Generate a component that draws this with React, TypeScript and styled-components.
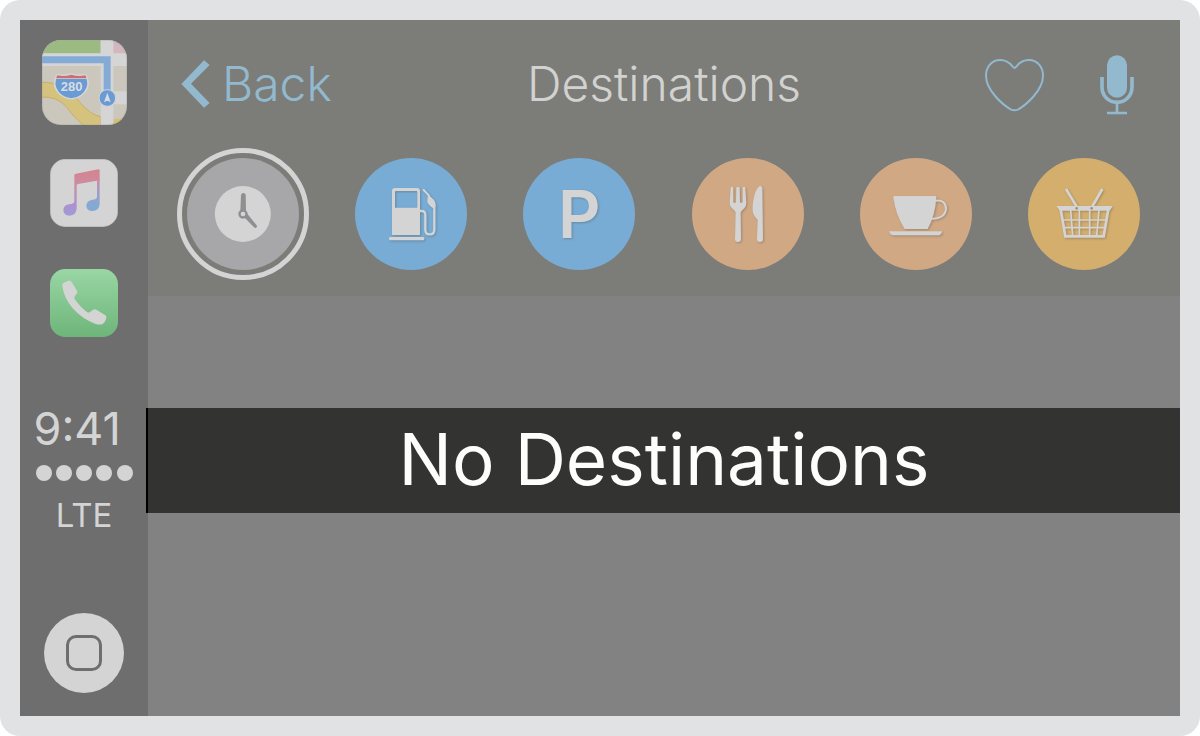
import React from "react";
import styled, { createGlobalStyle } from "styled-components";

const color = {
  frame: "#e1e2e4",
  sidebar: "#6e6e6e",
  header: "#7c7c79",
  body: "#828282",
  light: "#d4d4d4",
  text: "#d2d2d0",
  accent: "#92b9ce",
  banner: "#333331",
};

const GlobalStyle = createGlobalStyle`
  * { box-sizing: border-box; }
  body {
    margin: 0;
    background: #fff;
    font-family: Inter, "Liberation Sans", sans-serif;
  }
  button {
    padding: 0;
    border: 0;
    background: none;
    font: inherit;
    color: inherit;
    cursor: pointer;
  }
  svg { display: block; }
  h1, p { margin: 0; font-weight: inherit; }
`;

const Frame = styled.div`
  display: flex;
  min-height: 100vh;
  padding: 20px;
  border-radius: 20px;
  background: ${color.frame};
`;

const Sidebar = styled.nav`
  display: flex;
  flex-direction: column;
  align-items: center;
  flex: 0 0 128px;
  padding: 20px 0 23px;
  background: ${color.sidebar};
  color: ${color.light};
`;

const AppButton = styled.button<{ $gap: number }>`
  display: block;
  margin-bottom: ${(p) => p.$gap}px;
`;

const Status = styled.div`
  display: flex;
  flex-direction: column;
  width: 97px;
  margin-top: 28px;
`;

const Time = styled.time`
  font-size: 45px;
  line-height: 56px;
  white-space: nowrap;
  margin-left: -2px;
`;

const Signal = styled.div`
  display: flex;
  justify-content: space-between;
  margin-top: 8px;
`;

const Dot = styled.span`
  width: 16px;
  height: 16px;
  border-radius: 50%;
  background: ${color.light};
`;

const Carrier = styled.span`
  margin-top: 14px;
  font-size: 33px;
  line-height: 40px;
  text-align: center;
`;

const HomeButton = styled.button`
  display: grid;
  place-items: center;
  width: 80px;
  height: 80px;
  margin-top: auto;
  border-radius: 50%;
  background: ${color.light};
`;

const HomeMark = styled.span`
  width: 36px;
  height: 36px;
  border: 3px solid ${color.sidebar};
  border-radius: 10px;
`;

const Main = styled.main`
  display: flex;
  flex-direction: column;
  flex: 1;
  min-width: 0;
  background: ${color.body};
`;

const Header = styled.header`
  background: ${color.header};
`;

const Toolbar = styled.div`
  display: grid;
  grid-template-columns: 1fr auto 1fr;
  align-items: center;
  height: 128px;
  padding: 0 33px;
  font-size: 48px;
  line-height: 58px;
  font-weight: 300;
`;

const BackButton = styled.button`
  display: flex;
  align-items: center;
  justify-self: start;
  gap: 12px;
  color: ${color.accent};
`;

const Title = styled.h1`
  font-size: 48px;
  color: ${color.text};
`;

const Actions = styled.div`
  display: flex;
  align-items: center;
  justify-self: end;
  gap: 56px;
  padding: 2px 13px 0 0;
  color: ${color.accent};
`;

const Categories = styled.div`
  display: flex;
  justify-content: space-between;
  padding: 10px 40px 26px 39px;
`;

const CategoryButton = styled.button<{ $fill: string; $selected?: boolean }>`
  display: grid;
  place-items: center;
  width: 112px;
  height: 112px;
  border-radius: 50%;
  background: ${(p) => p.$fill};
  color: ${color.light};
  outline: ${(p) => (p.$selected ? `5px solid ${color.light}` : "none")};
  outline-offset: 5px;
`;

const Glyph = styled.svg`
  width: 112px;
  height: 112px;
  filter: drop-shadow(1px 1px 1px rgba(70, 70, 70, 0.35));
`;

const Letter = styled.span`
  font-size: 66px;
  line-height: 66px;
  font-weight: 600;
  filter: drop-shadow(1px 1px 1px rgba(70, 70, 70, 0.35));
`;

const Content = styled.section`
  flex: 1;
  padding-top: 112px;
`;

const Banner = styled.p`
  margin-left: -2px;
  padding-bottom: 3px;
  border-left: 2px solid #000;
  background: ${color.banner};
  color: #fdfdfb;
  font-size: 71px;
  line-height: 102px;
  text-align: center;
`;

const MapsIcon = () => (
  <svg width="85" height="85" viewBox="123 120 255 255" aria-hidden="true">
    <defs>
      <clipPath id="maps-tile">
        <rect x="123" y="120" width="255" height="255" rx="57" />
      </clipPath>
    </defs>
    <g clipPath="url(#maps-tile)">
      <rect x="123" y="120" width="255" height="255" fill="#cbc7bd" />
      <rect x="123" y="120" width="176" height="40" fill="#9bbb83" />
      <rect x="337" y="120" width="41" height="40" fill="#d2b7be" />
      <path
        d="M115 247Q160 244 190 265Q215 282 235 305Q268 345 299 350V380H252Q218 352 197 322Q172 288 115 291Z"
        fill="#d5c37d"
        stroke="#c9ad68"
        strokeWidth="3"
      />
      <path d="M337 358Q355 354 385 360V380H337Z" fill="#d5c06d" />
      <g fill="#d5d5d5">
        <rect x="123" y="160" width="255" height="38" />
        <rect x="299" y="120" width="38" height="255" />
        <rect x="337" y="274" width="41" height="39" />
      </g>
      <path d="M120 179H318.5V275" fill="none" stroke="#84aad6" strokeWidth="21" />
      <circle cx="319" cy="294" r="25" fill="#6b9bd4" stroke="#d5d5d5" strokeWidth="3" />
      <path d="M319 278L329 307Q323 302 319 302Q315 302 309 307Z" fill="#d8dde2" />
      <path
        d="M168 221Q190 227 211 220Q232 227 254 221Q266 238 263 257Q254 292 211 299Q168 292 159 257Q156 238 168 221Z"
        fill="#d5d5d5"
      />
      <path d="M165 237H257Q261 252 256 263Q245 290 211 295Q177 290 166 263Q161 252 165 237Z" fill="#6b9bd4" />
      <path d="M166 235Q166 230 169 226Q190 231 211 224Q232 231 253 226Q256 230 256 235Z" fill="#cc6f73" />
      <text
        x="212"
        y="273"
        textAnchor="middle"
        fontFamily="Liberation Sans, sans-serif"
        fontWeight="700"
        fontSize="39"
        fill="#d8dde2"
      >
        280
      </text>
    </g>
    <rect x="124" y="121" width="253" height="253" rx="56" fill="none" stroke="#a5a5a5" strokeOpacity="0.6" strokeWidth="2" />
  </svg>
);

const MusicIcon = () => (
  <svg width="68" height="68" viewBox="90 57 204 204" aria-hidden="true">
    <defs>
      <linearGradient id="music-left" x1="0" y1="0" x2="0" y2="1">
        <stop offset="0" stopColor="#d5838d" />
        <stop offset="0.3" stopColor="#cd8ba0" />
        <stop offset="0.75" stopColor="#ae8fcf" />
        <stop offset="1" stopColor="#a19bd6" />
      </linearGradient>
      <linearGradient id="music-right" x1="0" y1="0" x2="0" y2="1">
        <stop offset="0" stopColor="#cf8c9d" />
        <stop offset="0.4" stopColor="#a59cc4" />
        <stop offset="0.8" stopColor="#84a9d3" />
      </linearGradient>
    </defs>
    <rect x="91" y="58" width="202" height="202" rx="45" fill="#d4d4d4" stroke="#c3c3c3" strokeWidth="2" />
    <path
      d="M231 116H239V192Q238 213 217 213Q199 212 199 197Q200 182 217 179Q231 178 231 170Z"
      fill="url(#music-right)"
    />
    <path
      d="M163 106Q163 102 168 101L235 88Q239 87 239 91V121L174 132Q170 133 170 137V205Q169 227 148 227Q130 226 130 210Q131 195 148 193Q163 192 163 184Z"
      fill="url(#music-left)"
    />
  </svg>
);

const PhoneIcon = () => (
  <svg width="68" height="68" viewBox="90 387 204 204" aria-hidden="true">
    <defs>
      <linearGradient id="phone-fill" x1="0" y1="0" x2="0" y2="1">
        <stop offset="0" stopColor="#99d6a4" />
        <stop offset="1" stopColor="#6eb57a" />
      </linearGradient>
    </defs>
    <rect x="90" y="387" width="204" height="204" rx="46" fill="url(#phone-fill)" />
    <path
      d="M127 437Q126 431 131 428L145 422Q151 420 155 426L171 452Q174 458 169 463L164 469Q161 474 166 480Q184 504 201 516Q206 519 210 516L219 509Q224 506 229 509L255 525Q260 528 259 535Q256 546 248 552Q240 556 225 551Q188 538 158 505Q130 470 127 437Z"
      fill="#d4d4d4"
    />
  </svg>
);

const ChevronIcon = () => (
  <svg width="29" height="48" viewBox="34 56 87 144" aria-hidden="true">
    <path d="M103 57L120 71L64 127L120 185L103 199L35 128Z" fill="currentColor" />
  </svg>
);

const HeartIcon = () => (
  <svg width="59" height="53" viewBox="45 56 177 159" aria-hidden="true">
    <path
      d="M133.500 83C128 83 121 59 91 59C64 59 48 81 48 106C48 150 98 193 122 207Q133.500 213 145 207C169 193 219 150 219 106C219 81 203 59 176 59C146 59 139 83 133.500 83Z"
      fill="none"
      stroke="currentColor"
      strokeWidth="6"
    />
  </svg>
);

const MicIcon = () => (
  <svg width="34" height="60" viewBox="388 44 102 180" aria-hidden="true">
    <rect x="409" y="45" width="60" height="127" rx="30" fill="currentColor" />
    <path d="M394 110V141A45 45 0 0 0 484 141V110" fill="none" stroke="currentColor" strokeWidth="11" />
    <path d="M439 186V218M409 218H469" fill="none" stroke="currentColor" strokeWidth="8" />
  </svg>
);

const ClockGlyph = () => (
  <svg width="112" height="112" viewBox="51 54 336 336" aria-hidden="true">
    <circle cx="218.500" cy="222" r="84" fill="currentColor" />
    <g fill="#8f8f91">
      <path d="M213 165Q214 159 220 159Q226 159 227 165L228 214H211Z" />
      <path d="M221 230L230 219L260 256Q262 260 259 263Q256 265 252 262Z" />
      <circle cx="219" cy="222" r="14" />
    </g>
    <circle cx="219" cy="222" r="7" fill="currentColor" />
  </svg>
);

const FuelGlyph = () => (
  <Glyph viewBox="560 54 336 336" aria-hidden="true">
    <path
      d="M680 144H746Q755 144 755 153V285H671V153Q671 144 680 144ZM683 153Q680 153 680 156V203H747V156Q747 153 744 153Z"
      fill="currentColor"
      fillRule="evenodd"
    />
    <rect x="662" y="291" width="106" height="10" rx="4" fill="currentColor" />
    <path
      d="M755 213H760Q771 213 771 225V269Q771 283 784 283Q798 283 798 269V196"
      fill="none"
      stroke="currentColor"
      strokeWidth="7"
    />
    <path d="M766 150L782 167" stroke="currentColor" strokeWidth="6" strokeLinecap="round" />
    <path d="M779 163L797 180Q802 186 802 199Q800 206 793 204Q776 191 777 183Z" fill="currentColor" />
  </Glyph>
);

const DiningGlyph = () => (
  <Glyph viewBox="546 54 336 336" aria-hidden="true">
    <g fill="currentColor">
      <path d="M662 144Q663 140 666 140Q670 140 670 144V185Q671 189 674 189Q678 189 678 185L679 144Q680 140 684 140Q688 140 689 144L690 185Q690 189 694 189Q697 189 698 185V144Q698 140 702 140Q706 140 706 144L709 190Q709 198 703 205Q692 214 692 219L693 299Q692 306 684 306Q676 306 675 299L677 219Q677 214 666 205Q659 198 659 190Z" />
      <path d="M757 145Q755 136 748 139Q735 151 730 180Q727 200 728 214Q731 230 743 239L741 298Q741 306 750 306Q759 306 759 298Z" />
    </g>
  </Glyph>
);

const CoffeeGlyph = () => (
  <Glyph viewBox="30 54 336 336" aria-hidden="true">
    <path d="M130 172Q130 168 134 168H255Q259 168 259 172Q256 226 233 267H164Q137 226 130 172Z" fill="currentColor" />
    <path
      d="M256 182Q288 179 288 207Q285 236 244 236"
      fill="none"
      stroke="currentColor"
      strokeWidth="6"
    />
    <path d="M117 274H277Q274 284 268 286H128Q120 284 117 274Z" fill="currentColor" />
  </Glyph>
);

const BasketGlyph = () => (
  <Glyph viewBox="534 54 336 336" aria-hidden="true">
    <path d="M619 198H788L783 206L779 212H629L625 206Z" fill="currentColor" />
    <g fill="none" stroke="currentColor">
      <path d="M648 147L682 203M757 147L725 203" strokeWidth="8" />
      <path d="M632 208L646 289H761L775 208" strokeWidth="8" />
      <path d="M662 210L668 288M688 210V288M719 210V288M747 210L740 288M638 240H771M642 263H766" strokeWidth="5" />
    </g>
    <circle cx="680" cy="205" r="4" fill="#a5925f" />
    <circle cx="725" cy="205" r="4" fill="#a5925f" />
  </Glyph>
);

const categories = [
  { name: "Recents", fill: "#a7a7a9", icon: <ClockGlyph />, selected: true },
  { name: "Gas stations", fill: "#78acd4", icon: <FuelGlyph /> },
  { name: "Parking", fill: "#78acd4", icon: <Letter>P</Letter> },
  { name: "Restaurants", fill: "#d1a884", icon: <DiningGlyph /> },
  { name: "Coffee", fill: "#d1a884", icon: <CoffeeGlyph /> },
  { name: "Groceries", fill: "#d4ae6c", icon: <BasketGlyph /> },
];

export default function App() {
  return (
    <>
      <GlobalStyle />
      <Frame>
        <Sidebar aria-label="Apps">
          <AppButton $gap={34} aria-label="Maps">
            <MapsIcon />
          </AppButton>
          <AppButton $gap={42} aria-label="Music">
            <MusicIcon />
          </AppButton>
          <AppButton $gap={36} aria-label="Phone">
            <PhoneIcon />
          </AppButton>
          <Status>
            <Time>9:41</Time>
            <Signal role="img" aria-label="Signal strength, five of five">
              {[1, 2, 3, 4, 5].map((n) => (
                <Dot key={n} />
              ))}
            </Signal>
            <Carrier>LTE</Carrier>
          </Status>
          <HomeButton aria-label="Home">
            <HomeMark />
          </HomeButton>
        </Sidebar>
        <Main>
          <Header>
            <Toolbar>
              <BackButton>
                <ChevronIcon />
                Back
              </BackButton>
              <Title>Destinations</Title>
              <Actions>
                <button aria-label="Favorites">
                  <HeartIcon />
                </button>
                <button aria-label="Voice search">
                  <MicIcon />
                </button>
              </Actions>
            </Toolbar>
            <Categories>
              {categories.map((c) => (
                <CategoryButton
                  key={c.name}
                  $fill={c.fill}
                  $selected={c.selected}
                  aria-label={c.name}
                  aria-pressed={!!c.selected}
                >
                  {c.icon}
                </CategoryButton>
              ))}
            </Categories>
          </Header>
          <Content>
            <Banner>No Destinations</Banner>
          </Content>
        </Main>
      </Frame>
    </>
  );
}
